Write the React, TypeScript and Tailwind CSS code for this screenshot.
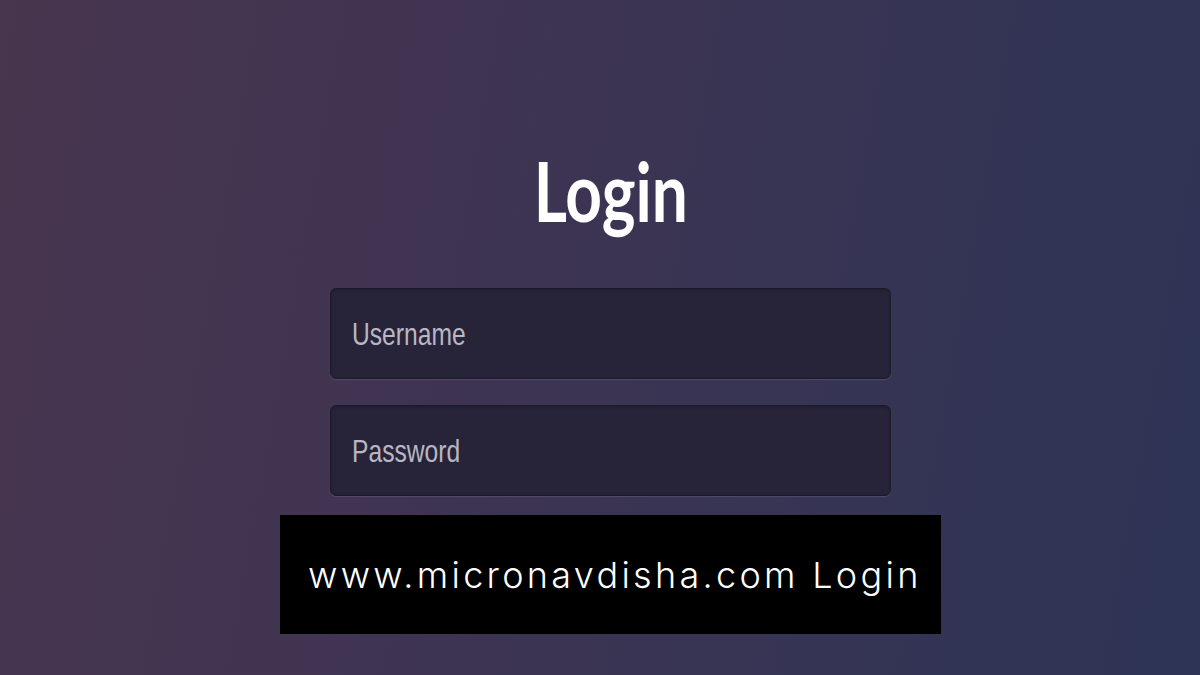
import React from "react";

export default function App() {
  return (
    <div className="h-[675px] w-[1200px] overflow-hidden bg-[linear-gradient(100deg,#48354e_0%,#3d3453_45%,#2d3456_100%)]">
      <div className="flex flex-col items-center pl-[21px] pt-[140px]">
        <h1 className="h-[110px] scale-x-[0.78] text-[82px] font-bold leading-[100px] text-white [font-family:Lato,'Open_Sans',sans-serif]">
          Login
        </h1>
        <div className="mt-[38px] flex flex-col gap-[26px]">
          {["Username", "Password"].map((t) => (
            <div
              key={t}
              className="flex h-[91px] w-[561px] items-center rounded-[6px] border border-[#1c1a29] bg-[#27243a] pl-[21px] shadow-[0_1px_1px_rgba(255,255,255,0.12),inset_0_1px_3px_rgba(0,0,0,0.25)]"
            >
              <span className="origin-left scale-x-[0.77] text-[32px] text-[#b9b7c2] [font-family:'Liberation_Sans',Arial,sans-serif]">
                {t}
              </span>
            </div>
          ))}
        </div>
        <div className="mt-[19px] flex h-[119px] w-[661px] items-center bg-black pl-[28px]">
          <span className="whitespace-nowrap text-[36px] font-light tracking-[3.3px] text-white [font-family:Inter,sans-serif]">
            www.micronavdisha.com Login
          </span>
        </div>
      </div>
    </div>
  );
}
